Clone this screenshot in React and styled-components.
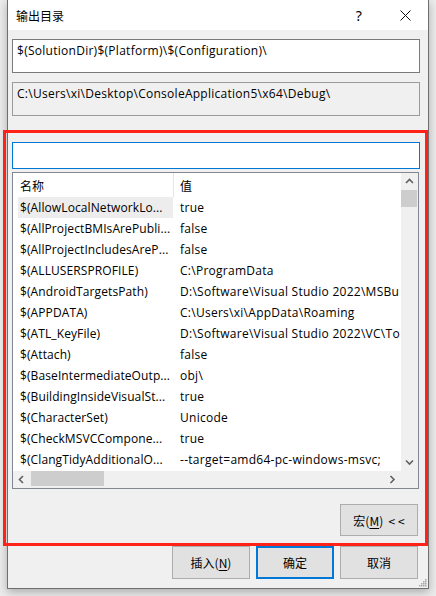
import React from "react";
import styled, { createGlobalStyle } from "styled-components";

const Global = createGlobalStyle`
  html, body { margin: 0; padding: 0; }
  body {
    background: #ececec;
    font-family: "Open Sans", "Noto Sans CJK SC", sans-serif;
    font-size: 12px;
    letter-spacing: 0.27px;
    color: #000;
  }
  * { box-sizing: border-box; }
`;

const Page = styled.div`
  position: relative;
  width: 436px;
  height: 596px;
  padding-left: 7px;
  overflow: hidden;
  background: #ececec;
`;

const Dialog = styled.div`
  width: 422px;
  height: 589px;
  border: 1px solid #6e6e6e;
  border-top: none;
  background: #f0f0f0;
  display: flex;
  flex-direction: column;
  box-shadow: 0 3px 9px rgba(0, 0, 0, 0.28);
  position: relative;
`;

const TitleBar = styled.div`
  height: 30px;
  flex: none;
  background: #fff;
  display: flex;
  align-items: center;
  padding-left: 8px;
`;

const TitleText = styled.div`
  flex: 1;
  font-size: 12px;
  letter-spacing: 0;
  font-family: "Noto Sans CJK SC", sans-serif;
`;

const CaptionButton = styled.div`
  width: 46px;
  height: 30px;
  display: flex;
  align-items: center;
  justify-content: center;
  font-size: 14px;
  font-family: "Noto Sans", sans-serif;
`;

const Body = styled.div`
  flex: 1;
  display: flex;
  flex-direction: column;
  padding: 9px 0 0 4px;
`;

const TextBox = styled.div`
  width: 408px;
  height: 34px;
  border: 1px solid ${(p) => (p.$readonly ? "#9a9a9a" : "#7a7a7a")};
  background: ${(p) => (p.$readonly ? "#f0f0f0" : "#fff")};
  padding: 3px 4px;
  line-height: 16px;
  white-space: nowrap;
  margin-bottom: ${(p) => p.$mb || 0}px;
`;

const Search = styled.div`
  width: 408px;
  height: 27px;
  border: 1px solid #0078d7;
  background: #fff;
  margin-bottom: 3px;
`;

const List = styled.div`
  width: 407px;
  height: 317px;
  border: 1px solid #828790;
  background: #fff;
  display: grid;
  grid-template-columns: 388px 17px;
  grid-template-rows: 298px 17px;
`;

const Viewport = styled.div`
  overflow: hidden;
  display: flex;
  flex-direction: column;
`;

const Header = styled.div`
  height: 24px;
  flex: none;
  display: grid;
  grid-template-columns: 160px 1px 1fr;
  align-items: center;
`;

const HeaderCell = styled.div`
  padding-left: ${(p) => p.$pl}px;
  font-family: "Noto Sans CJK SC", sans-serif;
  letter-spacing: 0;
  white-space: nowrap;
`;

const HeaderDivider = styled.div`
  height: 24px;
  background: #e5e5e5;
`;

const Row = styled.div`
  height: 21px;
  flex: none;
  display: grid;
  grid-template-columns: 5px 155px 1fr;
  align-items: stretch;
  line-height: 21px;
`;

const NameCell = styled.div`
  grid-column: 2;
  padding-left: 2px;
  white-space: nowrap;
  overflow: hidden;
  letter-spacing: 0.1px;
  background: ${(p) => (p.$selected ? "#ededed" : "transparent")};
`;

const ValueCell = styled.div`
  padding-left: 7px;
  white-space: nowrap;
  overflow: hidden;
`;

const VScroll = styled.div`
  background: #f0f0f0;
  display: flex;
  flex-direction: column;
`;

const HScroll = styled.div`
  background: #f0f0f0;
  display: flex;
  align-items: center;
`;

const Corner = styled.div`
  background: #f0f0f0;
`;

const Arrow = styled.div`
  width: 17px;
  height: 17px;
  flex: none;
  display: flex;
  align-items: center;
  justify-content: center;
`;

const VThumb = styled.div`
  width: 16px;
  height: 17px;
  background: #cdcdcd;
`;

const HThumb = styled.div`
  width: 73px;
  height: 15px;
  margin-left: 1px;
  align-self: flex-start;
  background: #cdcdcd;
`;

const Spacer = styled.div`
  flex: 1;
`;

const ButtonRow = styled.div`
  display: flex;
  justify-content: flex-end;
  gap: 6px;
  width: 408px;
  padding-right: 2px;
  margin-top: ${(p) => p.$mt}px;
`;

const Button = styled.div`
  width: 78px;
  height: ${(p) => p.$h || 32}px;
  background: #e1e1e1;
  border: ${(p) => (p.$default ? "2px solid #0078d7" : "1px solid #adadad")};
  display: flex;
  align-items: center;
  justify-content: center;
  font-family: "Noto Sans CJK SC", sans-serif;
  font-size: 12px;
  letter-spacing: 0;
  white-space: pre;
`;

const U = styled.span`
  text-decoration: underline;
  text-underline-offset: 2px;
`;

const Grip = styled.svg`
  position: absolute;
  right: 1px;
  bottom: 1px;
`;

const Annotation = styled.div`
  position: absolute;
  left: 3px;
  top: 130px;
  width: 425px;
  height: 416px;
  border: 3.5px solid #ff2218;
  pointer-events: none;
`;

const Chevron = ({ dir }) => {
  const d = {
    up: "M1 5 L4.5 1.5 L8 5",
    down: "M1 1.5 L4.5 5 L8 1.5",
    left: "M5 1 L1.5 4.5 L5 8",
    right: "M1.5 1 L5 4.5 L1.5 8",
  }[dir];
  const vertical = dir === "up" || dir === "down";
  return (
    <svg width={vertical ? 9 : 7} height={vertical ? 7 : 9} viewBox={vertical ? "0 0 9 7" : "0 0 7 9"}>
      <path d={d} fill="none" stroke="#606060" strokeWidth="1.6" />
    </svg>
  );
};

const rows = [
  ["$(AllowLocalNetworkLo...", "true"],
  ["$(AllProjectBMIsArePubli...", "false"],
  ["$(AllProjectIncludesAreP...", "false"],
  ["$(ALLUSERSPROFILE)", "C:\\ProgramData"],
  ["$(AndroidTargetsPath)", "D:\\Software\\Visual Studio 2022\\MSBu"],
  ["$(APPDATA)", "C:\\Users\\xi\\AppData\\Roaming"],
  ["$(ATL_KeyFile)", "D:\\Software\\Visual Studio 2022\\VC\\To"],
  ["$(Attach)", "false"],
  ["$(BaseIntermediateOutp...", "obj\\"],
  ["$(BuildingInsideVisualSt...", "true"],
  ["$(CharacterSet)", "Unicode"],
  ["$(CheckMSVCCompone...", "true"],
  ["$(ClangTidyAdditionalO...", "--target=amd64-pc-windows-msvc;"],
];

export default function App() {
  return (
    <>
      <Global />
      <Page>
        <Dialog>
          <TitleBar>
            <TitleText>输出目录</TitleText>
            <CaptionButton>?</CaptionButton>
            <CaptionButton>
              <svg width="11" height="11" viewBox="0 0 11 11">
                <path d="M0.5 0.5 L10.5 10.5 M10.5 0.5 L0.5 10.5" stroke="#111" strokeWidth="1" />
              </svg>
            </CaptionButton>
          </TitleBar>
          <Body>
            <TextBox $mb={9}>$(SolutionDir)$(Platform)\$(Configuration)\</TextBox>
            <TextBox $readonly $mb={26}>C:\Users\xi\Desktop\ConsoleApplication5\x64\Debug\</TextBox>
            <Search />
            <List>
              <Viewport>
                <Header>
                  <HeaderCell $pl={7}>名称</HeaderCell>
                  <HeaderDivider />
                  <HeaderCell $pl={6}>值</HeaderCell>
                </Header>
                {rows.map(([n, v], i) => (
                  <Row key={n}>
                    <NameCell $selected={i === 0}>{n}</NameCell>
                    <ValueCell>{v}</ValueCell>
                  </Row>
                ))}
              </Viewport>
              <VScroll>
                <Arrow><Chevron dir="up" /></Arrow>
                <VThumb />
                <Spacer />
                <Arrow><Chevron dir="down" /></Arrow>
              </VScroll>
              <HScroll>
                <Arrow><Chevron dir="left" /></Arrow>
                <HThumb />
                <Spacer />
                <Arrow><Chevron dir="right" /></Arrow>
              </HScroll>
              <Corner />
            </List>
            <ButtonRow $mt={15}>
              <Button>宏(<U>M</U>)  &lt; &lt;</Button>
            </ButtonRow>
            <ButtonRow $mt={10}>
              <Button $h={33}>插入(<U>N</U>)</Button>
              <Button $h={33} $default>确定</Button>
              <Button $h={33}>取消</Button>
            </ButtonRow>
          </Body>
          <Grip width="8" height="8" viewBox="0 0 8 8">
            {[[6, 0], [6, 2], [4, 2], [6, 4], [4, 4], [2, 4], [6, 6], [4, 6], [2, 6], [0, 6]].map(([x, y]) => (
              <rect key={`${x}-${y}`} x={x} y={y} width="1.5" height="1.5" fill="#a8a8a8" />
            ))}
          </Grip>
        </Dialog>
        <Annotation />
      </Page>
    </>
  );
}
